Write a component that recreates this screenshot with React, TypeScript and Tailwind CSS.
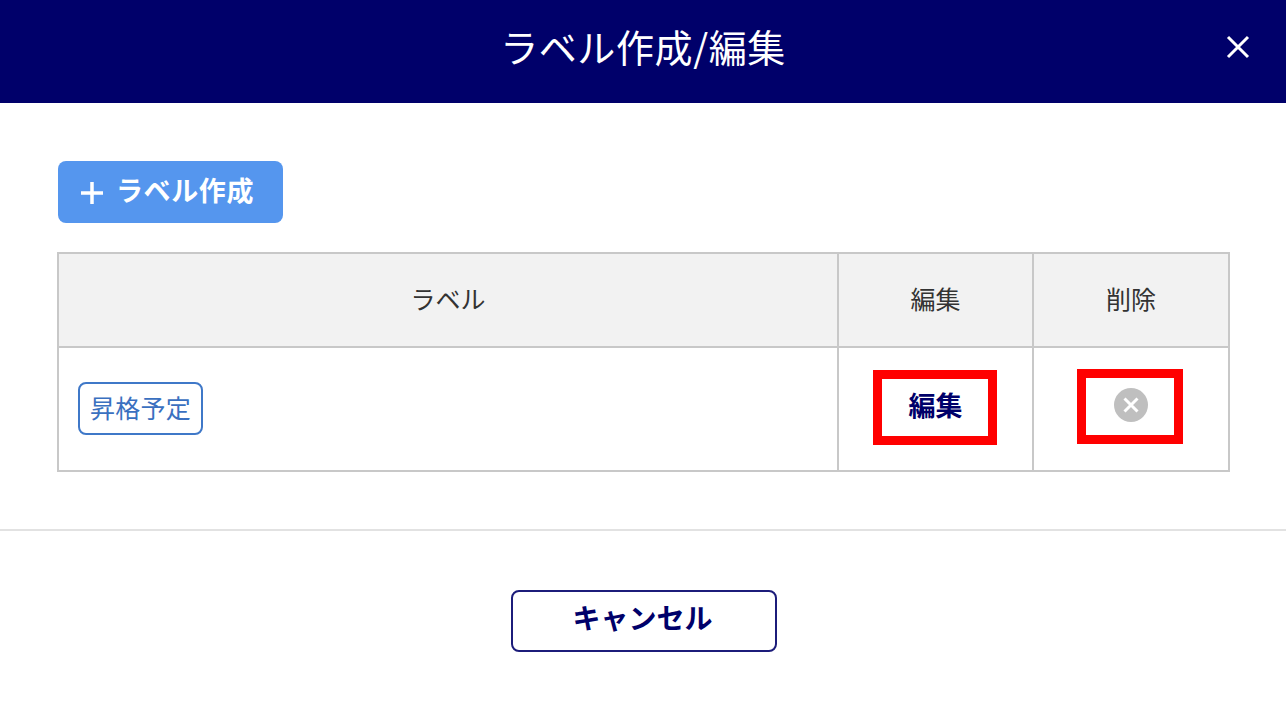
const fontStack = { fontFamily: '"Noto Sans CJK JP", "Noto Sans", sans-serif' };

const App = () => {
  return (
    <div className="w-[1286px] h-[707px] bg-white overflow-hidden" style={fontStack}>
      <header className="relative flex items-center justify-center h-[103px] bg-[#00006a]">
        <h1 className="text-[38px] leading-none font-normal tracking-[0.6px] text-white pb-[11px]">ラベル作成/編集</h1>
        <button className="absolute right-[34px] top-[33px] text-white">
          <svg width="28" height="28" viewBox="0 0 28 28" fill="none" stroke="currentColor" strokeWidth="3">
            <path d="M4 4 L24 24 M24 4 L4 24" />
          </svg>
        </button>
      </header>

      <div className="px-[58px] pt-[58px]">
        <button className="flex items-center w-[225px] h-[62px] pl-[22px] pb-[6px] rounded-[8px] bg-[#5596ee] text-white font-bold text-[27px] leading-none">
          <svg width="24" height="24" viewBox="0 0 24 24" fill="none" stroke="currentColor" strokeWidth="3.5" className="mr-[12px] mt-[8px]">
            <path d="M12 1 V23 M1 12 H23" />
          </svg>
          <span className="tracking-[0.6px]">ラベル作成</span>
        </button>

        <table className="mt-[29px] -ml-px w-[1171px] table-fixed border-collapse border-2 border-[#c8c8c8] text-[25px] text-[#333333]">
          <colgroup>
            <col className="w-[780px]" />
            <col className="w-[195px]" />
            <col className="w-[196px]" />
          </colgroup>
          <thead>
            <tr className="h-[94px] bg-[#f2f2f2]">
              <th className="border-2 border-[#c8c8c8] font-normal pb-[2px]">ラベル</th>
              <th className="border-2 border-[#c8c8c8] font-normal pb-[2px]">編集</th>
              <th className="border-2 border-[#c8c8c8] font-normal pb-[2px]">削除</th>
            </tr>
          </thead>
          <tbody>
            <tr className="h-[124px]">
              <td className="border-2 border-[#c8c8c8] pl-[19px] pb-[2px]">
                <span className="inline-flex items-center justify-center w-[125px] h-[53px] rounded-[8px] border-2 border-[#3f78c8] text-[#3a70c0] leading-none tracking-[0.3px] pb-[2px]">
                  昇格予定
                </span>
              </td>
              <td className="relative border-2 border-[#c8c8c8] text-center">
                <a className="font-bold text-[27px] text-[#00006a] relative bottom-[4px]">編集</a>
                <div className="absolute left-[34px] top-[22px] w-[124px] h-[75px] border-[9px] border-[#ff0000]" />
              </td>
              <td className="relative border-2 border-[#c8c8c8]">
                <div className="flex justify-center pb-[8px]">
                  <span className="flex items-center justify-center w-[34px] h-[34px] rounded-full bg-[#bfbfbf]">
                    <svg width="18" height="18" viewBox="0 0 18 18" fill="none" stroke="white" strokeWidth="3">
                      <path d="M2.5 2.5 L15.5 15.5 M15.5 2.5 L2.5 15.5" />
                    </svg>
                  </span>
                </div>
                <div className="absolute left-[43px] top-[21px] w-[106px] h-[75px] border-[9px] border-[#ff0000]" />
              </td>
            </tr>
          </tbody>
        </table>
      </div>

      <div className="mt-[57px] border-t-2 border-[#e2e2e2] flex justify-center pt-[59px] pl-[2px]">
        <button className="w-[266px] h-[62px] rounded-[8px] border-2 border-[#1c1c7a] text-[#00006a] font-bold text-[28px] leading-none pb-[8px] pr-[3px]">
          キャンセル
        </button>
      </div>
    </div>
  );
};

export default App;
